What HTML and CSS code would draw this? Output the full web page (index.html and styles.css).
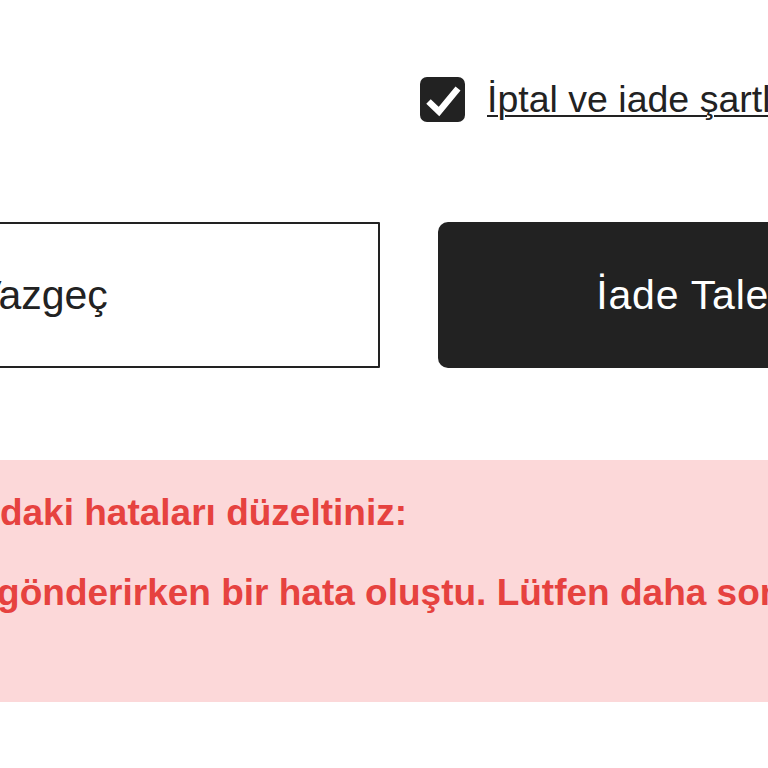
FILE: index.html
```html
<!DOCTYPE html>
<html lang="tr">
<head>
<meta charset="utf-8">
<title>İade Talebi</title>
<link rel="stylesheet" href="styles.css">
</head>
<body>
<div class="page">
  <div class="terms">
    <span class="checkbox" aria-checked="true" role="checkbox">
      <svg width="45" height="45" viewBox="0 0 45 45"><path d="M8.5 24.5 L19 34.5 L38 11.5" fill="none" stroke="#fff" stroke-width="6.5" stroke-linejoin="miter"/></svg>
    </span>
    <a class="terms-link" href="#">İptal ve iade şartlarını okudum ve kabul ediyorum</a>
  </div>
  <div class="actions">
    <button class="btn btn-cancel" type="button">Vazgeç</button>
    <button class="btn btn-submit" type="button">İade Talebi Oluştur</button>
  </div>
  <div class="error">
    <p class="error-title">Lütfen aşağıdaki hataları düzeltiniz:</p>
    <ul class="error-list">
      <li>Talebinizi gönderirken bir hata oluştu. Lütfen daha sonra tekrar deneyin.</li>
    </ul>
  </div>
</div>
</body>
</html>
```

FILE: styles.css
```css
html, body {
  margin: 0;
  padding: 0;
  background: #ffffff;
  overflow: hidden;
}
body {
  width: 768px;
  height: 768px;
  font-family: "Liberation Sans", Arial, sans-serif;
  color: #222222;
}
.page {
  width: 1394px;
  margin-left: -288px;
  padding-top: 77px;
}
.terms {
  display: flex;
  align-items: center;
  gap: 22px;
  padding-left: 708px;
  height: 45px;
  white-space: nowrap;
}
.checkbox {
  flex: 0 0 45px;
  width: 45px;
  height: 45px;
  border-radius: 7px;
  background: #222222;
  display: block;
}
.checkbox svg { display: block; }
.terms-link {
  font-size: 37.5px;
  line-height: 45px;
  color: #222222;
  text-decoration: underline;
  text-decoration-thickness: 2px;
  text-underline-offset: 3px;
}
.actions {
  display: grid;
  grid-template-columns: 668px 668px;
  column-gap: 58px;
  margin-top: 100px;
  height: 146px;
}
.btn {
  font-family: "Liberation Sans", Arial, sans-serif;
  font-size: 41px;
  line-height: 46px;
  height: 146px;
  display: flex;
  align-items: center;
  justify-content: center;
  white-space: nowrap;
  cursor: pointer;
}
.btn-cancel {
  padding: 0 10px 0 0;
  background: #ffffff;
  color: #222222;
  border: 2px solid #222222;
  border-radius: 1px;
}
.btn-submit {
  padding: 0 0 0 5px;
  letter-spacing: 0.8px;
  background: #222222;
  color: #ffffff;
  border: 0;
  border-radius: 10px;
}
.error {
  margin-top: 92px;
  height: 242px;
  box-sizing: border-box;
  background: #fcd8d9;
  color: #e6423f;
  font-weight: bold;
  font-size: 37px;
  line-height: 44px;
  padding: 31px 0 0 70px;
  white-space: nowrap;
}
.error-title {
  margin: 0;
}
.error-list {
  list-style: none;
  margin: 36px 0 0 0;
  padding: 0 0 0 39px;
}
```
